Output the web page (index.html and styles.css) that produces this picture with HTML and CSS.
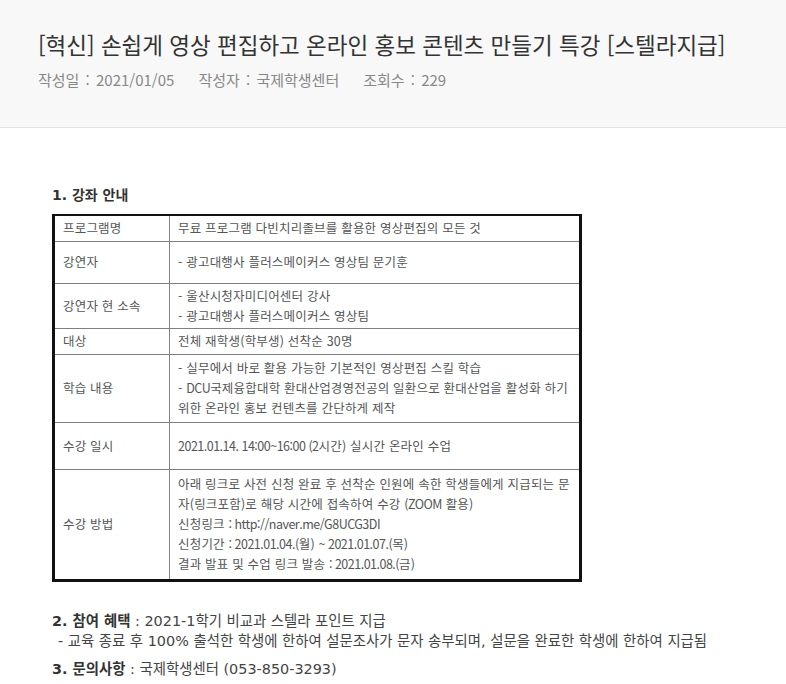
FILE: index.html
```html
<!DOCTYPE html>
<html lang="ko">
<head>
<meta charset="utf-8">
<title>특강 안내</title>
<link rel="stylesheet" href="styles.css">
</head>
<body>
<header class="post-head">
  <h1 class="post-title">[혁신] 손쉽게 영상 편집하고 온라인 홍보 콘텐츠 만들기 특강 [스텔라지급]</h1>
  <div class="post-meta">
    <span class="meta-item">작성일 : 2021/01/05</span>
    <span class="meta-item">작성자 : 국제학생센터</span>
    <span class="meta-item">조회수 : 229</span>
  </div>
</header>
<main class="post-body">
  <h2 class="sec-title">1. 강좌 안내</h2>
  <table class="info">
    <colgroup><col class="c1"><col class="c2"></colgroup>
    <tr class="r1"><td>프로그램명</td><td>무료 프로그램 다빈치리졸브를 활용한 영상편집의 모든 것</td></tr>
    <tr class="r2"><td>강연자</td><td>- 광고대행사 플러스메이커스 영상팀 문기훈</td></tr>
    <tr class="r3"><td>강연자 현 소속</td><td>- 울산시청자미디어센터 강사<br>- 광고대행사 플러스메이커스 영상팀</td></tr>
    <tr class="r4"><td>대상</td><td>전체 재학생(학부생) 선착순 30명</td></tr>
    <tr class="r5"><td>학습 내용</td><td>- 실무에서 바로 활용 가능한 기본적인 영상편집 스킬 학습<br>- <span class="lat">DCU</span>국제융합대학 환대산업경영전공의 일환으로 환대산업을 활성화 하기<br>위한 온라인 홍보 컨텐츠를 간단하게 제작</td></tr>
    <tr class="r6"><td>수강 일시</td><td><span class="lat">2021.01.14. 14:00~16:00 (2</span>시간) 실시간 온라인 수업</td></tr>
    <tr class="r7"><td>수강 방법</td><td>아래 링크로 사전 신청 완료 후 선착순 인원에 속한 학생들에게 지급되는 문<br>자(링크포함)로 해당 시간에 접속하여 수강 <span class="lat">(ZOOM</span> 활용)<br>신청링크 <span class="lat">: http://naver.me/G8UCG3DI</span><br>신청기간 <span class="lat">: 2021.01.04.(</span>월) <span class="lat">~ 2021.01.07.(</span>목)<br>결과 발표 및 수업 링크 발송 <span class="lat">: 2021.01.08.(</span>금)</td></tr>
  </table>
  <p class="sec-line sec-2"><b>2. 참여 혜택</b> : 2021-1학기 비교과 스텔라 포인트 지급</p>
  <p class="sec-line sec-sub">- 교육 종료 후 100% 출석한 학생에 한하여 설문조사가 문자 송부되며, 설문을 완료한 학생에 한하여 지급됨</p>
  <p class="sec-line sec-3"><b>3. 문의사항</b> : 국제학생센터 (053-850-3293)</p>
</main>
</body>
</html>
```
FILE: styles.css
```css
html, body {
  margin: 0;
  padding: 0;
  background: #fff;
  overflow: hidden;
}
body {
  font-family: "Noto Sans CJK KR", "Noto Sans", sans-serif;
  color: #333;
}
.post-head {
  box-sizing: border-box;
  height: 128px;
  padding: 28px 38px 0;
  background: #f8f8f8;
  border-bottom: 1px solid #e4e4e4;
}
.post-title {
  margin: 0;
  font-size: 22.5px;
  line-height: 32px;
  font-weight: 400;
  color: #333;
}
.post-meta {
  margin-top: 10px;
  font-size: 15px;
  line-height: 20px;
  color: #888;
  display: flex;
  gap: 24px;
  word-spacing: 2px;
}
.post-body {
  padding: 57px 0 0 52px;
}
.sec-title {
  margin: 0;
  font-family: "DejaVu Sans", "Noto Sans CJK KR", sans-serif;
  font-size: 14px;
  line-height: 20px;
  font-weight: 700;
  color: #333;
}
.info {
  margin-top: 9px;
  width: 530px;
  border-collapse: collapse;
  border-style: solid;
  border-color: #111;
  border-width: 2px 3px 3px 3px;
  font-size: 12.5px;
  letter-spacing: 0.2px;
  line-height: 20px;
  color: #555;
}
.info .c1 { width: 116px; }
.info td {
  border: 1px solid #808080;
  padding: 2px 8px;
  vertical-align: middle;
}
.info .r1 { height: 26px; }
.info .r2 { height: 42px; }
.info .r3 { height: 44px; }
.info .r4 { height: 26px; }
.info .r5 { height: 68px; }
.info .r6 { height: 47px; }
.info .r7 { height: 111px; }
.lat {
  letter-spacing: -0.5px;
}
.sec-line {
  margin: 0;
  font-family: "DejaVu Sans", "Noto Sans CJK KR", sans-serif;
  font-size: 14.4px;
  line-height: 20px;
  color: #444;
}
.sec-line b { color: #333; }
.sec-2 { margin-top: 29px; }
.sec-sub { padding-left: 6px; }
.sec-3 { margin-top: 8px; }
```
